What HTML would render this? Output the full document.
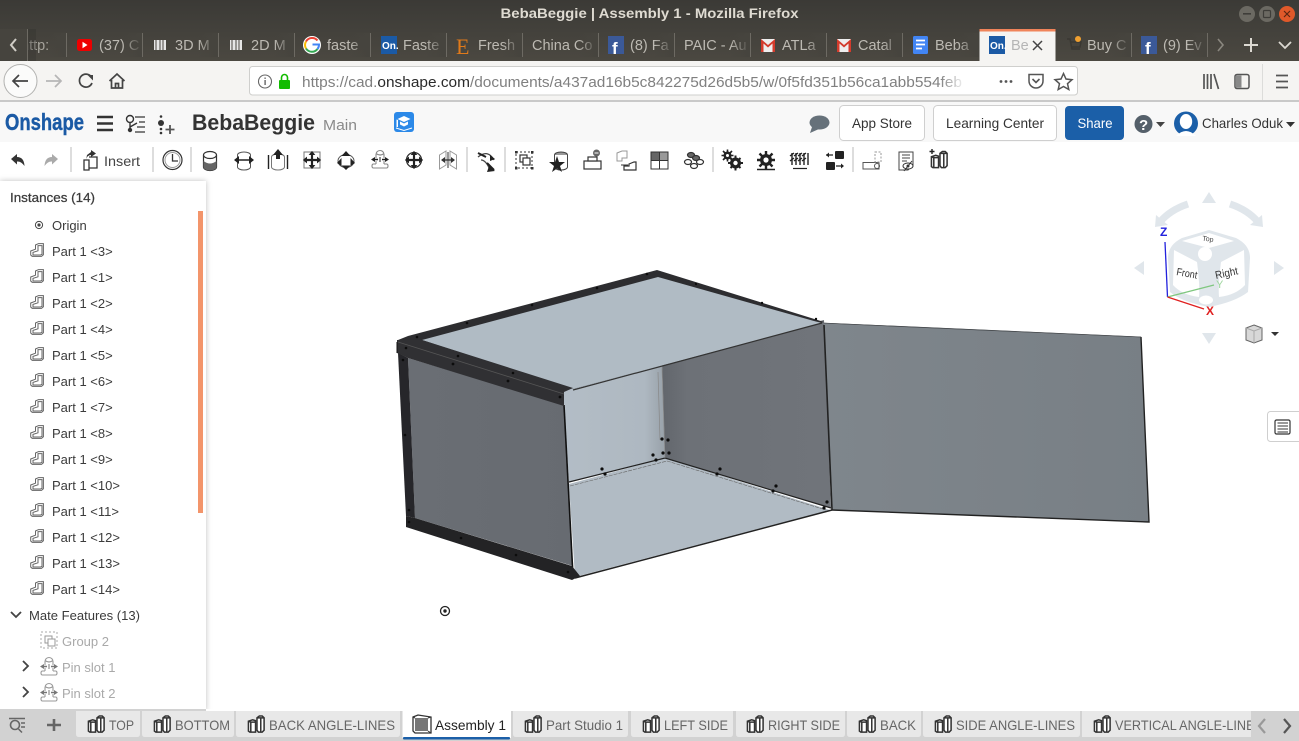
<!DOCTYPE html>
<html><head><meta charset="utf-8"><title>BebaBeggie | Assembly 1</title>
<style>
html,body{margin:0;padding:0;width:1299px;height:741px;overflow:hidden;background:#fff}
svg{display:block}
text{font-family:"Liberation Sans",sans-serif}
.tt{font-size:14.5px;fill:#bdbab3}
.tree{font-size:13px;fill:#3b3b3b}
.dim{font-size:13px;fill:#a9a9a9}
.tab{font-size:14px;fill:#666}
.sep{stroke:#6d6a63;stroke-width:1}
.bar{stroke:#ddd;stroke-width:2}
</style></head><body>
<svg width="1299" height="741" viewBox="0 0 1299 741" xmlns="http://www.w3.org/2000/svg">
<defs>
<linearGradient id="tb" x1="0" y1="0" x2="0" y2="1"><stop offset="0" stop-color="#3b3a36"/><stop offset="1" stop-color="#4b4841"/></linearGradient>
<linearGradient id="ff" x1="0" y1="0" x2="1" y2="0"><stop offset="0" stop-color="#46443e" stop-opacity="0"/><stop offset="1" stop-color="#46443e"/></linearGradient>
<linearGradient id="ffw" x1="0" y1="0" x2="1" y2="0"><stop offset="0" stop-color="#fff" stop-opacity="0"/><stop offset="1" stop-color="#fff"/></linearGradient>
<linearGradient id="door" x1="0" y1="0" x2="1" y2="0"><stop offset="0" stop-color="#7f868c"/><stop offset="1" stop-color="#787f85"/></linearGradient>
<linearGradient id="inr" x1="0" y1="0" x2="1" y2="0"><stop offset="0" stop-color="#62666c"/><stop offset=".15" stop-color="#6d7177"/><stop offset="1" stop-color="#70747a"/></linearGradient>
<linearGradient id="inl" x1="0" y1="0" x2="1" y2="0"><stop offset="0" stop-color="#b3bdc6"/><stop offset=".8" stop-color="#aeb8c1"/><stop offset="1" stop-color="#98a1a9"/></linearGradient>
<linearGradient id="lf" x1="0" y1="0" x2="1" y2="0"><stop offset="0" stop-color="#6a6e74"/><stop offset="1" stop-color="#676b71"/></linearGradient>
<symbol id="part" viewBox="0 0 14 14" overflow="visible"><path d="M.7 8 L5.5 6.2 V2 L8.5 .6 H13.4 V11.8 L11.5 13.4 H2.2 L.7 12 Z" fill="#fff" stroke="#666" stroke-width="1"/><path d="M3 9.4 L8 7.8 V2.6 H12 V11.4 L10.5 12 H3 Z" fill="#fff" stroke="#666" stroke-width="1"/></symbol>
<symbol id="tabi" viewBox="0 0 20 20" overflow="visible"><path d="M1.5 6.5 L6 5 L9 6 V18 H3 L1.5 17 Z M1.5 6.5 L4 7.5 V18 M4 7.5 H9" fill="#fff" stroke="#333" stroke-width="1.6"/><path d="M10.5 3 L13 1 H16 L18 3 V16 L16 18 H12 L10.5 16 Z M10.5 3 H14.5 V18 M14.5 3 L18 3" fill="#fff" stroke="#333" stroke-width="1.6"/></symbol>
<symbol id="pin" viewBox="0 0 18 19" overflow="visible"><g fill="none" stroke="#999" stroke-width="1.1"><path d="M5 8 V4.5 A4 4 0 0 1 13 4.5 V8 M5 3.5 Q9 6.5 13 3.5 M5 11 V14 M13 11 V14 M5 14 H2.5 Q1 14 1 16 Q1 18 2.5 18 H15.5 Q17 18 17 16 Q17 14 15.5 14 H13"/></g><path d="M0 9.5 L4 7 V8.8 H7 V10.2 H4 V12 Z M18 9.5 L14 7 V8.8 H11 V10.2 H14 V12 Z" fill="#777"/><path d="M9 7 V12" stroke="#777"/></symbol>
<symbol id="pind" viewBox="0 0 18 19" overflow="visible"><g fill="none" stroke="#888" stroke-width="1.1"><path d="M5 8 V4.5 A4 4 0 0 1 13 4.5 V8 M5 3.5 Q9 6.5 13 3.5 M5 11 V14 M13 11 V14 M5 14 H2.5 Q1 14 1 16 Q1 18 2.5 18 H15.5 Q17 18 17 16 Q17 14 15.5 14 H13"/></g><path d="M0 9.5 L4 7 V8.8 H7 V10.2 H4 V12 Z M18 9.5 L14 7 V8.8 H11 V10.2 H14 V12 Z" fill="#222"/><path d="M9 7 V12" stroke="#222"/></symbol>
<symbol id="arr" viewBox="0 0 24 24" overflow="visible"><path d="M12 1 L16 6 H13.3 V10.7 H18 V8 L23 12 L18 16 V13.3 H13.3 V18 H16 L12 23 L8 18 H10.7 V13.3 H6 V16 L1 12 L6 8 V10.7 H10.7 V6 H8 Z" fill="#222"/></symbol>
</defs>

<!-- Title bar + tab strip -->
<rect width="1299" height="61" fill="url(#tb)"/>
<text x="649.5" y="18" text-anchor="middle" font-size="14" font-weight="bold" fill="#dfdbd2" textLength="298" lengthAdjust="spacingAndGlyphs">BebaBeggie | Assembly 1 - Mozilla Firefox</text>
<circle cx="1247" cy="14" r="8" fill="#6b6962"/><rect x="1243" y="13" width="8" height="1.6" fill="#3e3d39"/>
<circle cx="1267" cy="14" r="8" fill="#6b6962"/><rect x="1263.5" y="10.5" width="7" height="7" rx="1" fill="none" stroke="#3e3d39" stroke-width="1.2"/>
<circle cx="1287" cy="14" r="8" fill="#e0592a"/><path d="M1284 11 L1290 17 M1290 11 L1284 17" stroke="#5c2612" stroke-width="1.2"/>

<!-- tab overflow left -->
<text x="21" y="50" class="tt" fill-opacity=".8">http:</text>
<rect x="0" y="29" width="27.5" height="32" fill="#46443e"/>
<path d="M16 39 L11 45 L16 51" fill="none" stroke="#d0cdc6" stroke-width="2"/>
<line x1="27.5" y1="29" x2="27.5" y2="61" stroke="#6d6a63"/>
<rect x="28" y="29" width="8" height="32" fill="#2f2d2a" opacity=".3"/>

<g transform="translate(0,-11)">
<g>
<line class="sep" x1="66.5" y1="44" x2="66.5" y2="68"/>
<line class="sep" x1="142.5" y1="44" x2="142.5" y2="68"/>
<line class="sep" x1="218.5" y1="44" x2="218.5" y2="68"/>
<line class="sep" x1="294.5" y1="44" x2="294.5" y2="68"/>
<line class="sep" x1="370.5" y1="44" x2="370.5" y2="68"/>
<line class="sep" x1="446.5" y1="44" x2="446.5" y2="68"/>
<line class="sep" x1="522.5" y1="44" x2="522.5" y2="68"/>
<line class="sep" x1="598.5" y1="44" x2="598.5" y2="68"/>
<line class="sep" x1="674.5" y1="44" x2="674.5" y2="68"/>
<line class="sep" x1="750.5" y1="44" x2="750.5" y2="68"/>
<line class="sep" x1="826.5" y1="44" x2="826.5" y2="68"/>
<line class="sep" x1="902.5" y1="44" x2="902.5" y2="68"/>
<line class="sep" x1="1131.5" y1="44" x2="1131.5" y2="68"/>
<line class="sep" x1="1207.5" y1="44" x2="1207.5" y2="68"/>
</g>
<!-- yt -->
<rect x="77" y="50" width="15" height="12" rx="2.5" fill="#e00"/><path d="M82.5 52.8 L87.5 56 L82.5 59.2 Z" fill="#fff"/>
<text x="99" y="61" class="tt">(37) C</text>
<!-- 3D -->
<rect x="154" y="51" width="5.5" height="10" fill="#e6e6e6"/><rect x="160.5" y="51" width="5.5" height="10" fill="#e6e6e6"/><path d="M156 51 V61 M163 51 V61" stroke="#4a4740"/>
<text x="175" y="61" class="tt">3D M</text>
<rect x="230" y="51" width="5.5" height="10" fill="#e6e6e6"/><rect x="236.5" y="51" width="5.5" height="10" fill="#e6e6e6"/><path d="M232 51 V61 M239 51 V61" stroke="#4a4740"/>
<text x="251" y="61" class="tt">2D M</text>
<!-- G -->
<circle cx="312" cy="56" r="9" fill="#fff"/>
<path d="M317.5 51.5 A7 7 0 0 0 306 52.5" fill="none" stroke="#ea4335" stroke-width="2"/><path d="M306 52.5 A7 7 0 0 0 306 59.5" fill="none" stroke="#fbbc05" stroke-width="2"/><path d="M306 59.5 A7 7 0 0 0 317.5 60" fill="none" stroke="#34a853" stroke-width="2"/><path d="M317.5 60 A7 7 0 0 0 319 55.5 H312.5" fill="none" stroke="#4285f4" stroke-width="2"/>
<text x="327" y="61" class="tt">faste</text>
<!-- On -->
<rect x="381" y="47" width="16" height="18" fill="#1b5aa5"/><text x="382" y="60" font-size="10" font-weight="bold" fill="#fff">On.</text>
<text x="403" y="61" class="tt">Faste</text>
<!-- E -->
<text x="456" y="65" font-size="22" fill="#e07a1a" style="font-family:'Liberation Serif',serif">E</text>
<text x="478" y="61" class="tt">Fresh</text>
<text x="532" y="61" class="tt">China Co</text>
<!-- f -->
<rect x="608" y="47" width="16" height="18" fill="#3b5998"/><text x="612" y="65" font-size="17" font-weight="bold" fill="#fff">f</text>
<text x="630" y="61" class="tt">(8) Fa</text>
<text x="684" y="61" class="tt">PAIC - Au</text>
<!-- gmail -->
<rect x="761" y="50" width="14" height="13" fill="#eee"/><path d="M761 50 L768 56 L775 50 V63 H772.5 V54.5 L768 58.5 L763.5 54.5 V63 H761 Z" fill="#d33b2c"/>
<text x="782" y="61" class="tt">ATLa</text>
<rect x="837" y="50" width="14" height="13" fill="#eee"/><path d="M837 50 L844 56 L851 50 V63 H848.5 V54.5 L844 58.5 L839.5 54.5 V63 H837 Z" fill="#d33b2c"/>
<text x="858" y="61" class="tt">Catal</text>
<!-- docs -->
<rect x="913" y="47" width="15" height="18" rx="1.5" fill="#4285f4"/><path d="M916 51.5 H925 M916 55.5 H925 M916 59.5 H922" stroke="#fff" stroke-width="1.8"/>
<text x="935" y="61" class="tt">Beba</text>
<!-- buy -->
<path d="M1067 50 H1070 L1072 60 H1080 M1071 53 H1081 L1080 58 H1072" fill="none" stroke="#3a3833" stroke-width="1.5"/><circle cx="1078" cy="50" r="3" fill="#f0a030"/>
<text x="1087" y="61" class="tt">Buy C</text>
<rect x="1141" y="47" width="16" height="18" fill="#3b5998"/><text x="1145" y="65" font-size="17" font-weight="bold" fill="#fff">f</text>
<text x="1163" y="61" class="tt">(9) Ev</text>
<!-- fade overlays -->
<rect x="48" y="44" width="18" height="24" fill="url(#ff)"/><rect x="122" y="44" width="20" height="24" fill="url(#ff)"/><rect x="198" y="44" width="20" height="24" fill="url(#ff)"/><rect x="274" y="44" width="20" height="24" fill="url(#ff)"/><rect x="350" y="44" width="20" height="24" fill="url(#ff)"/><rect x="426" y="44" width="20" height="24" fill="url(#ff)"/><rect x="502" y="44" width="20" height="24" fill="url(#ff)"/><rect x="578" y="44" width="20" height="24" fill="url(#ff)"/><rect x="654" y="44" width="20" height="24" fill="url(#ff)"/><rect x="730" y="44" width="20" height="24" fill="url(#ff)"/><rect x="806" y="44" width="20" height="24" fill="url(#ff)"/><rect x="882" y="44" width="20" height="24" fill="url(#ff)"/><rect x="958" y="44" width="21" height="24" fill="url(#ff)"/><rect x="1111" y="44" width="20" height="24" fill="url(#ff)"/><rect x="1187" y="44" width="20" height="24" fill="url(#ff)"/>
<!-- active tab -->
<rect x="979.5" y="40" width="76" height="32" fill="#f5f4f2"/><rect x="979.5" y="40" width="76" height="2.5" fill="#f0845a"/>
<rect x="989" y="47" width="16" height="18" fill="#1b5aa5"/><text x="990" y="60" font-size="10" font-weight="bold" fill="#fff">On.</text>
<text x="1011" y="61" font-size="14.5" fill="#b5b5b5">Be</text>
<path d="M1033 52 L1042 61 M1042 52 L1033 61" stroke="#444" stroke-width="1.5"/>
<path d="M1218 50 L1223 56 L1218 62" fill="none" stroke="#8a877f" stroke-width="1.6"/>
<path d="M1251 49 V63 M1244 56 H1258" stroke="#dcd9d2" stroke-width="2"/>
<path d="M1279 53 L1285 59 L1291 53" fill="none" stroke="#dcd9d2" stroke-width="1.8"/>
</g>

<!-- Nav toolbar -->
<rect y="61" width="1299" height="39" fill="#f5f4f2"/>
<rect x="979.5" y="59" width="76" height="3" fill="#f5f4f2"/>
<circle cx="20.5" cy="81" r="16.5" fill="#fbfbfa" stroke="#b2b2b0"/>
<path d="M28 81 H13 M19 75 L13 81 L19 87" fill="none" stroke="#444" stroke-width="1.7"/>
<path d="M61 81 H46 M55 75 L61 81 L55 87" fill="none" stroke="#b6b6b6" stroke-width="1.7"/>
<path d="M91 76.5 A6.5 6.5 0 1 0 92 83" fill="none" stroke="#444" stroke-width="1.7"/><path d="M87.5 75 L93 75 V80.5 Z" fill="#444"/>
<path d="M109.5 81 L117 74 L124.5 81 M111.5 80 V88 H122.5 V80 M115.5 88 V83.5 H118.5 V88" fill="none" stroke="#444" stroke-width="1.7"/>
<rect x="249.5" y="66.5" width="828" height="28.5" rx="3" fill="#fff" stroke="#cfcfcd"/>
<circle cx="265" cy="81.5" r="6.5" fill="none" stroke="#666" stroke-width="1.1"/><rect x="264.4" y="80" width="1.4" height="5" fill="#666"/><rect x="264.4" y="77.5" width="1.4" height="1.4" fill="#666"/>
<rect x="279" y="80" width="11" height="9" rx="1" fill="#12bc00"/><path d="M281.5 80 V77.5 A3 3 0 0 1 287.5 77.5 V80" fill="none" stroke="#12bc00" stroke-width="1.6"/>
<text x="302" y="87" font-size="15" fill="#808080" textLength="660" lengthAdjust="spacingAndGlyphs">https://cad.<tspan fill="#2b2b2b">onshape.com</tspan>/documents/a437ad16b5c842275d26d5b5/w/0f5fd351b56ca1abb554feb</text>
<rect x="940" y="68" width="26" height="26" fill="url(#ffw)"/>
<circle cx="1001" cy="81.5" r="1.4" fill="#555"/><circle cx="1006" cy="81.5" r="1.4" fill="#555"/><circle cx="1011" cy="81.5" r="1.4" fill="#555"/>
<path d="M1029 74.5 H1043 V81 A7 7 0 0 1 1029 81 Z" fill="none" stroke="#555" stroke-width="1.5"/><path d="M1032.5 79 L1036 82.5 L1039.5 79" fill="none" stroke="#555" stroke-width="1.6"/>
<path d="M1063.5 73.5 L1066 79 L1072 79.7 L1067.5 83.7 L1068.8 89.5 L1063.5 86.5 L1058.2 89.5 L1059.5 83.7 L1055 79.7 L1061 79 Z" fill="none" stroke="#555" stroke-width="1.5"/>
<path d="M1204 74 V89 M1207.5 74 V89 M1211 74 V89 M1214 74 L1218.5 89" fill="none" stroke="#555" stroke-width="1.7"/>
<rect x="1235" y="74.5" width="14" height="14" rx="2" fill="none" stroke="#555" stroke-width="1.5"/><rect x="1236" y="75.5" width="5.5" height="12" fill="#888"/>
<line x1="1262.5" y1="64" x2="1262.5" y2="100" stroke="#dcdcda"/>
<path d="M1276 75.5 H1288 M1276 81.5 H1288 M1276 87.5 H1288" stroke="#555" stroke-width="1.8"/>

<!-- page separator and Onshape header -->
<rect y="100" width="1299" height="2" fill="#c9c9c9"/>
<rect y="102" width="1299" height="40" fill="#f8f8f8"/>
<text x="5" y="130" font-size="23" font-weight="bold" fill="#1b5aa5" stroke="#1b5aa5" stroke-width=".4" textLength="79" lengthAdjust="spacingAndGlyphs">Onshape</text>
<path d="M97 117 H113 M97 123.5 H113 M97 130 H113" stroke="#333" stroke-width="2.6"/>
<circle cx="130" cy="119" r="3.5" fill="none" stroke="#333" stroke-width="1.4"/><circle cx="130" cy="130" r="2.2" fill="#333"/><path d="M130 122.5 V128 M130 127 L137 123" fill="none" stroke="#333" stroke-width="1.4"/>
<path d="M135 117 H145 M139 122 H145 M137 127 H145 M135 132 H145" stroke="#555" stroke-width="1.5"/>
<circle cx="161" cy="116.5" r="1.3" fill="#333"/><circle cx="161" cy="123" r="3" fill="#333"/><circle cx="161" cy="129" r="1.3" fill="#333"/><circle cx="161" cy="133" r="1.3" fill="#333"/>
<path d="M170 125 V134 M165.5 129.5 H174.5" stroke="#555" stroke-width="1.8"/>
<text x="192" y="130" font-size="22" font-weight="bold" fill="#333" textLength="123" lengthAdjust="spacingAndGlyphs">BebaBeggie</text>
<text x="323" y="130" font-size="15" fill="#8a8a8a" textLength="34" lengthAdjust="spacingAndGlyphs">Main</text>
<rect x="394" y="112" width="20" height="20" rx="3" fill="#2c89e8"/><path d="M397.5 119 L404 116 L410.5 119 L404 122 Z" fill="#fff"/><path d="M400 121.5 V124.5 L404 126.5 L408 124.5 V121.5 L404 123.5 Z M396.5 119.5 V127 H398 V120 Z" fill="#fff"/><path d="M396 128 L404 130.5 L412 128" fill="none" stroke="#fff" stroke-width="1"/>
<ellipse cx="819.5" cy="122.5" rx="10" ry="7" fill="#66717a"/><path d="M812 127 L810 133 L819 129 Z" fill="#66717a"/>
<rect x="839.5" y="105.5" width="85" height="35" rx="4" fill="#fff" stroke="#cfcfcf"/>
<text x="852" y="128" font-size="14" fill="#333" textLength="60" lengthAdjust="spacingAndGlyphs">App Store</text>
<rect x="933.5" y="105.5" width="123" height="35" rx="4" fill="#fff" stroke="#cfcfcf"/>
<text x="946" y="128" font-size="14" fill="#333" textLength="98" lengthAdjust="spacingAndGlyphs">Learning Center</text>
<rect x="1065" y="106" width="59" height="34" rx="4" fill="#1b5fa8"/>
<text x="1077.5" y="128" font-size="14" fill="#fff" textLength="35" lengthAdjust="spacingAndGlyphs">Share</text>
<circle cx="1143.5" cy="124" r="9" fill="#55606a"/>
<text x="1139" y="130" font-size="15" font-weight="bold" fill="#fff">?</text>
<path d="M1156 122 H1165 L1160.5 127 Z" fill="#444"/>
<circle cx="1186" cy="123.5" r="12" fill="#1b5fa8"/><ellipse cx="1186" cy="121.5" rx="6.2" ry="7.5" fill="#fff"/><path d="M1176 136 Q1186 126 1196 136 Z" fill="#fff"/>
<text x="1202" y="128" font-size="14" fill="#333" textLength="81" lengthAdjust="spacingAndGlyphs">Charles Oduk</text>
<path d="M1286 122 H1295 L1290.5 127 Z" fill="#333"/>

<!-- Toolbar -->
<rect y="142" width="1299" height="36" fill="#fff"/>
<g>
<line class="bar" x1="71" y1="147" x2="71" y2="172"/><line class="bar" x1="153" y1="147" x2="153" y2="172"/><line class="bar" x1="191" y1="147" x2="191" y2="172"/><line class="bar" x1="467" y1="147" x2="467" y2="172"/><line class="bar" x1="505" y1="147" x2="505" y2="172"/><line class="bar" x1="713" y1="147" x2="713" y2="172"/><line class="bar" x1="853" y1="147" x2="853" y2="172"/>
</g>
<path d="M11 159 L17 154 V157 Q24 157 24.5 166 Q21 161 17 161.5 V164.5 Z" fill="#333"/>
<path d="M58 159 L52 154 V157 Q45 157 44.5 166 Q48 161 52 161.5 V164.5 Z" fill="#aaa"/>
<path d="M87 155 L91 152 V150 L96 153.5 L91 157 V155 Q87 155 86 160 Z" fill="#333"/><path d="M84 160 H89 V170 H84 Z M89 157 H97 V168 H89" fill="#fff" stroke="#333" stroke-width="1.3"/>
<text x="104" y="166" font-size="13.5" fill="#444" textLength="36" lengthAdjust="spacingAndGlyphs">Insert</text>
<circle cx="172.5" cy="160" r="9.5" fill="none" stroke="#333" stroke-width="1.2"/><circle cx="172.5" cy="160" r="7.5" fill="none" stroke="#999" stroke-width="1"/><path d="M172.5 154 V161 H178" fill="none" stroke="#333" stroke-width="1.3"/>
<path d="M203.5 155 V167 A6.5 3.5 0 0 0 216.5 167 V155" fill="#fff" stroke="#333" stroke-width="1.2"/><ellipse cx="210" cy="155" rx="6.5" ry="3.5" fill="#fff" stroke="#333" stroke-width="1.2"/><path d="M203.5 161 Q210 166 216.5 161 V167 A6.5 3.5 0 0 1 203.5 167 Z" fill="#666"/>
<g><ellipse cx="244" cy="155" rx="6.5" ry="3" fill="#fff" stroke="#555"/><path d="M237.5 155 V167 A6.5 3 0 0 0 250.5 167 V155" fill="#fff" stroke="#555"/><path d="M235 160 H253" stroke="#222" stroke-width="1.6"/><path d="M234 160 L239 156 V164 Z M254 160 L249 156 V164 Z" fill="#222"/></g>
<g><ellipse cx="278" cy="157" rx="6.5" ry="3" fill="#fff" stroke="#777"/><path d="M271.5 157 V167 A6.5 3 0 0 0 284.5 167 V157" fill="#fff" stroke="#777"/><path d="M268.5 155 V169 M287.5 155 V169" stroke="#222" stroke-width="1.4"/><path d="M278 149 L283 155 H280 V159 H276 V155 H273 Z" fill="#222"/></g>
<g><rect x="304" y="152" width="16" height="16" fill="none" stroke="#777"/><use href="#arr" x="302" y="150" width="20" height="20"/></g>
<g><ellipse cx="346" cy="161" rx="8" ry="6.5" fill="none" stroke="#555"/><path d="M337 163 L341.5 158 V166 Z M355 163 L350.5 158 V166 Z M346 151 L350.5 156 H341.5 Z M346 170 L341.5 165.5 H350.5 Z" fill="#222"/></g>
<use href="#pind" x="371" y="150" width="18" height="19"/>
<g><circle cx="414" cy="160" r="7.5" fill="none" stroke="#333" stroke-width="1.3"/><use href="#arr" x="404" y="150" width="20" height="20"/></g>
<g><path d="M439.5 155 L446 151 V165 L439.5 169 Z M450 151 L456.5 155 V169 L450 165 Z" fill="none" stroke="#999"/><path d="M442 160 H454" stroke="#333" stroke-width="1.3"/><path d="M441 160 L445 157 V163 Z M455 160 L451 157 V163 Z" fill="#333"/><path d="M448 152 V168" stroke="#333"/></g>
<g fill="none" stroke="#444" stroke-width="1.3"><path d="M478 157 Q488 149 494 160 M481 160 Q486 160 490 170"/><path d="M478 153 L486 157" stroke-width="2" stroke="#222"/><path d="M487 163 L494 170" stroke-width="2" stroke="#222"/></g><path d="M490 155 L495 159 L490 161 Z M489 166 L495 171 L487 172 Z" fill="#222"/>
<g><rect x="516" y="152" width="16" height="16" fill="none" stroke="#333" stroke-dasharray="2 2"/><rect x="520" y="155" width="7" height="7" fill="#fff" stroke="#333" stroke-width="1.2"/><rect x="523" y="158" width="7" height="7" fill="#fff" stroke="#333" stroke-width="1.2"/><rect x="515" y="151" width="2.5" height="2.5" fill="#333"/><rect x="531" y="151" width="2.5" height="2.5" fill="#333"/><rect x="515" y="167" width="2.5" height="2.5" fill="#333"/><rect x="531" y="167" width="2.5" height="2.5" fill="#333"/></g>
<g><ellipse cx="561" cy="155" rx="6.5" ry="3" fill="#999" stroke="#444"/><path d="M554.5 155 V167 A6.5 3 0 0 0 567.5 167 V155" fill="#fff" stroke="#444"/><path d="M557 156 L559 162 H565 L560 166 L562 172 L557 168.5 L552 172 L554 166 L549 162 H555 Z" fill="#222"/></g>
<g><rect x="584" y="161" width="17" height="8" fill="#fff" stroke="#333" stroke-width="1.2"/><rect x="588" y="157" width="9" height="4" fill="#fff" stroke="#333" stroke-width="1.2"/><circle cx="596.5" cy="153" r="3.5" fill="#666"/><path d="M594.5 153 H598.5" stroke="#fff"/></g>
<g fill="#fff"><path d="M617 153 L622 151 H627 V158 H622 V161 H617 Z" stroke="#999"/><path d="M629 164 L634 162 H636 V170 H624 V166 H629 Z" stroke="#333" stroke-width="1.2"/></g><path d="M621 165 H628" stroke="#333"/>
<g><rect x="651" y="152" width="8.5" height="8.5" fill="#666" stroke="#333"/><rect x="659.5" y="152" width="8.5" height="8.5" fill="#999" stroke="#333"/><rect x="651" y="160.5" width="8.5" height="8.5" fill="#fff" stroke="#333"/><rect x="659.5" y="160.5" width="8.5" height="8.5" fill="#fff" stroke="#333"/></g>
<g fill="none" stroke="#333" stroke-width="1.2"><ellipse cx="691" cy="155" rx="3.5" ry="2.5" fill="#666"/><ellipse cx="696" cy="158" rx="3.5" ry="2.5" fill="#666"/><ellipse cx="688" cy="162" rx="3.5" ry="2.5"/><ellipse cx="700" cy="162" rx="3.5" ry="2.5"/><ellipse cx="694" cy="166" rx="3.5" ry="2.5"/></g>
<g fill="#222"><circle cx="727.5" cy="155.5" r="4"/><circle cx="735.5" cy="163" r="5.5"/><path d="M727.5 149.5 V161.5 M721.5 155.5 H733.5 M723 151 L732 160 M732 151 L723 160" stroke="#222" stroke-width="1.6"/><path d="M735.5 155.5 V170.5 M728 163 H743 M730.5 158 L740.5 168 M740.5 158 L730.5 168" stroke="#222" stroke-width="2"/></g><circle cx="727.5" cy="155.5" r="1.5" fill="#fff"/><circle cx="735.5" cy="163" r="2.2" fill="#fff"/>
<g><circle cx="766" cy="160" r="6" fill="#222"/><path d="M766 151 V169 M757 160 H775 M759.5 153.5 L772.5 166.5 M772.5 153.5 L759.5 166.5" stroke="#222" stroke-width="2.4"/><circle cx="766" cy="160" r="2.6" fill="#fff"/><path d="M757 169.5 H775" stroke="#222" stroke-width="1.6"/></g>
<g fill="none" stroke="#222" stroke-width="1.4"><path d="M792 153 V165 M796 153 V165 M800 153 V165 M804 153 V165 M808 153 V165"/><path d="M790 156 L794 153 M794 156 L798 153 M798 156 L802 153 M802 156 L806 153 M790 161 L794 158 M794 161 L798 158 M798 161 L802 158 M802 161 L806 158"/><path d="M793 168.5 H807" stroke-width="1.2"/></g>
<g fill="#222"><rect x="835" y="151" width="9" height="8" rx="1"/><rect x="826" y="162" width="9" height="8" rx="1"/><path d="M826 155 H833 M836 166 H843" stroke="#222" stroke-width="1.2"/><path d="M826 155 L829 152.5 V157.5 Z M844 166 L841 163.5 V168.5 Z"/></g>
<g><rect x="863" y="162.5" width="16" height="6.5" fill="#fff" stroke="#555"/><rect x="875" y="152" width="6" height="10" fill="none" stroke="#999" stroke-dasharray="2 1.5"/><circle cx="877" cy="166" r="2.5" fill="none" stroke="#555"/></g>
<g><path d="M899 152 H913 V165 L908 170 H899 Z" fill="#fff" stroke="#444"/><path d="M902 155 H910 M902 158 H910 M902 161 H907" stroke="#444"/><ellipse cx="908" cy="166" rx="5" ry="3" fill="#fff" stroke="#333"/><circle cx="908" cy="166" r="1.5" fill="#333"/><path d="M904 171 L912 161" stroke="#333"/></g>
<use href="#tabi" x="930" y="150" width="19" height="20"/>
<path d="M932 154 V149 M929.5 151.5 H934.5" stroke="#222" stroke-width="1.4"/>

<!-- Viewport content: model -->
<path d="M822 323 L1141 337 L1149 522 L832 510 Z" fill="url(#door)" stroke="#555" stroke-width=".6"/>
<path d="M1141 337 L1149 522 L832 510" fill="none" stroke="#222" stroke-width="1.4"/>
<path d="M1141 337 L822 323" fill="none" stroke="#4a4e52" stroke-width=".8"/>
<path d="M563 388 L662 361 L665 458 L569 482 Z" fill="url(#inl)"/>
<path d="M662 361 L824 320 L831 508 L665 458 Z" fill="url(#inr)"/>
<path d="M569 484 L665 458 L830 510 L575 577 Z" fill="#b1bbc4"/>
<path d="M569 482 L665 458 L831 508" fill="none" stroke="#222" stroke-width="1.2"/>
<path d="M570 486 L667 461 L826 510" fill="none" stroke="#666" stroke-width=".6" stroke-dasharray="4 1"/>
<path d="M662 367 L665 458 M658 372 L660 440" fill="none" stroke="#888" stroke-width=".7"/>
<path d="M824 325 L832 510" fill="none" stroke="#222" stroke-width="1.6"/>
<path d="M575 578 L832 510" fill="none" stroke="#222" stroke-width="1.5"/>
<path d="M408 358 L564 405 L573 566 L415 518 Z" fill="url(#lf)"/>
<path d="M564 405 L573 576" fill="none" stroke="#111" stroke-width="1.6"/>
<path d="M398 353 L408 358 L415 518 L406 516 Z" fill="#26262a"/>
<path d="M406 516 L415 518 L572 566 L580 576 L572 580 L406 527 Z" fill="#232325"/>
<path d="M398 340 L408 336 L657 270 L824 322 L573 389 Z" fill="#2d2d30"/>
<path d="M422 340 L658 277 L814 321 L822 323 L573 389 Z" fill="#b0bbc4"/>
<path d="M573 390 L822 323" stroke="#333" stroke-width="1.2"/>
<path d="M397 340 L422 340 L573 388 L564 392 L564 406 L408 358 L397 353 Z" fill="#303033"/>
<path d="M398 342 L564 394" stroke="#555" stroke-width=".8"/>
<path d="M397 342 V353" stroke="#111"/>
<g fill="#0c0c0c">
<circle cx="467" cy="323" r="1.3"/><circle cx="532" cy="305" r="1.3"/><circle cx="597" cy="288" r="1.3"/><circle cx="647" cy="274" r="1.3"/><circle cx="417" cy="337" r="1.3"/>
<circle cx="406" cy="348" r="1.3"/><circle cx="403" cy="360" r="1.3"/><circle cx="453" cy="364" r="1.4"/><circle cx="508" cy="381" r="1.4"/><circle cx="560" cy="397" r="1.4"/><circle cx="458" cy="356" r="1.3"/><circle cx="513" cy="373" r="1.3"/>
<circle cx="405" cy="435" r="1.3"/><circle cx="409" cy="510" r="1.3"/><circle cx="409" cy="522" r="1.3"/><circle cx="461" cy="538" r="1.3"/><circle cx="516" cy="555" r="1.3"/><circle cx="568" cy="572" r="1.3"/>
<circle cx="602" cy="469" r="1.6"/><circle cx="605" cy="474" r="1.6"/><circle cx="653" cy="455" r="1.6"/><circle cx="656" cy="460" r="1.6"/><circle cx="662" cy="439" r="1.6"/><circle cx="668" cy="440" r="1.6"/><circle cx="663" cy="453" r="1.6"/><circle cx="669" cy="453" r="1.6"/><circle cx="720" cy="469" r="1.6"/><circle cx="717" cy="474" r="1.6"/><circle cx="776" cy="486" r="1.6"/><circle cx="773" cy="491" r="1.6"/><circle cx="827" cy="502" r="1.6"/><circle cx="824" cy="508" r="1.6"/><circle cx="696" cy="284" r="1.2"/><circle cx="762" cy="303" r="1.2"/><circle cx="816" cy="319" r="1.2"/>
</g>
<circle cx="445" cy="611" r="4.5" fill="#fff" stroke="#222" stroke-width="1.3"/><circle cx="445" cy="611" r="1.7" fill="#222"/>

<!-- Nav cube -->
<g fill="#e0e6eb">
<path d="M1209 192 L1216 203 H1202 Z"/><path d="M1134 268 L1144 261 V275 Z"/><path d="M1284 268 L1274 261 V275 Z"/><path d="M1209 344 L1202 333 H1216 Z"/>
</g>
<g fill="none" stroke="#e0e6eb" stroke-width="7"><path d="M1188 204 Q1170 210 1160 222"/><path d="M1230 204 Q1248 210 1258 222"/></g>
<path d="M1155 227 L1156 215 L1168 225 Z M1263 227 L1262 215 L1250 225 Z" fill="#e0e6eb"/>
<path d="M1182 238 L1209 230 L1236 238 Q1250 245 1250 258 L1248 292 Q1235 302 1209 307 Q1182 302 1170 292 L1168 258 Q1168 245 1182 238 Z" fill="#e0e6eb"/>
<path d="M1182 241 L1209 233 L1234 241 L1209 248 Z" fill="#fff"/>
<path d="M1174 250 L1197 262 Q1200 285 1199 297 Q1182 295 1173 285 Z" fill="#fff"/>
<path d="M1244 250 L1221 262 Q1218 285 1219 297 Q1236 295 1245 285 Z" fill="#fff"/>
<ellipse cx="1205" cy="254" rx="7" ry="7" fill="#fff"/><ellipse cx="1206" cy="300" rx="7" ry="4.5" fill="#fff"/>
<text x="1202" y="241" font-size="7" fill="#444" transform="rotate(8 1206 241)">Top</text>
<text x="1176" y="275" font-size="10.5" fill="#333" transform="rotate(10 1176 275)" textLength="21" lengthAdjust="spacingAndGlyphs">Front</text>
<text x="1216" y="279" font-size="11" fill="#333" transform="rotate(-12 1216 279)" textLength="23" lengthAdjust="spacingAndGlyphs">Right</text>
<path d="M1167.5 297 L1165 242" stroke="#2222dd" stroke-width="1.3"/><path d="M1167.5 297 L1214 285" stroke="#7fc77f" stroke-width="1.2"/><path d="M1167.5 297 L1204 309" stroke="#e02020" stroke-width="1.3"/>
<text x="1160" y="236" font-size="12" font-weight="bold" fill="#2222dd">Z</text>
<text x="1216" y="288" font-size="11" fill="#9fd69f">Y</text>
<text x="1206" y="315" font-size="12" font-weight="bold" fill="#e02020">X</text>
<path d="M1254 325 L1262 328 V340 L1254 343 L1246 340 V328 Z" fill="#d8d8d8" stroke="#666"/><path d="M1246 328 L1254 331 L1262 328 M1254 331 V343" fill="none" stroke="#aaa"/>
<path d="M1271 332 H1279 L1275 336 Z" fill="#333"/>
<rect x="1267.5" y="411.5" width="40" height="30" rx="3" fill="#fff" stroke="#cfcfcf"/>
<rect x="1275" y="420" width="15" height="14" rx="1.5" fill="none" stroke="#333" stroke-width="1.2"/><path d="M1277.5 423 H1288 M1277.5 426 H1288 M1277.5 429 H1288 M1277.5 432 H1288" stroke="#333"/>

<!-- Instances panel -->
<rect x="0" y="181" width="206" height="530" fill="#fff" style="filter:drop-shadow(0 0 3px rgba(0,0,0,.25))"/>
<text x="10" y="202" font-size="13" fill="#3b3b3b" textLength="85" lengthAdjust="spacingAndGlyphs" stroke="#3b3b3b" stroke-width=".25">Instances (14)</text>
<rect x="198" y="211" width="5" height="302" fill="#f3956b"/>
<circle cx="39" cy="225" r="3.6" fill="none" stroke="#444"/><circle cx="39" cy="225" r="1.6" fill="#444"/>
<text x="52" y="230" class="tree">Origin</text>
<use href="#part" x="30" y="243" width="14" height="14"/><text x="52" y="256" class="tree">Part 1 &lt;3&gt;</text>
<use href="#part" x="30" y="269" width="14" height="14"/><text x="52" y="282" class="tree">Part 1 &lt;1&gt;</text>
<use href="#part" x="30" y="295" width="14" height="14"/><text x="52" y="308" class="tree">Part 1 &lt;2&gt;</text>
<use href="#part" x="30" y="321" width="14" height="14"/><text x="52" y="334" class="tree">Part 1 &lt;4&gt;</text>
<use href="#part" x="30" y="347" width="14" height="14"/><text x="52" y="360" class="tree">Part 1 &lt;5&gt;</text>
<use href="#part" x="30" y="373" width="14" height="14"/><text x="52" y="386" class="tree">Part 1 &lt;6&gt;</text>
<use href="#part" x="30" y="399" width="14" height="14"/><text x="52" y="412" class="tree">Part 1 &lt;7&gt;</text>
<use href="#part" x="30" y="425" width="14" height="14"/><text x="52" y="438" class="tree">Part 1 &lt;8&gt;</text>
<use href="#part" x="30" y="451" width="14" height="14"/><text x="52" y="464" class="tree">Part 1 &lt;9&gt;</text>
<use href="#part" x="30" y="477" width="14" height="14"/><text x="52" y="490" class="tree">Part 1 &lt;10&gt;</text>
<use href="#part" x="30" y="503" width="14" height="14"/><text x="52" y="516" class="tree">Part 1 &lt;11&gt;</text>
<use href="#part" x="30" y="529" width="14" height="14"/><text x="52" y="542" class="tree">Part 1 &lt;12&gt;</text>
<use href="#part" x="30" y="555" width="14" height="14"/><text x="52" y="568" class="tree">Part 1 &lt;13&gt;</text>
<use href="#part" x="30" y="581" width="14" height="14"/><text x="52" y="594" class="tree">Part 1 &lt;14&gt;</text>
<path d="M11 612 L16 617 L21 612" fill="none" stroke="#444" stroke-width="1.8"/>
<text x="29" y="620" class="tree" textLength="111" lengthAdjust="spacingAndGlyphs">Mate Features (13)</text>
<g><rect x="41" y="632" width="16" height="16" fill="none" stroke="#aaa" stroke-dasharray="2 2"/><rect x="45" y="636" width="7" height="7" fill="#fff" stroke="#999"/><rect x="48" y="639" width="7" height="7" fill="#fff" stroke="#999"/></g>
<text x="62" y="646" class="dim">Group 2</text>
<path d="M23 661 L28 666 L23 671" fill="none" stroke="#444" stroke-width="1.8"/>
<use href="#pin" x="40" y="657" width="18" height="19"/><text x="62" y="672" class="dim">Pin slot 1</text>
<path d="M23 687 L28 692 L23 697" fill="none" stroke="#444" stroke-width="1.8"/>
<use href="#pin" x="40" y="683" width="18" height="19"/><text x="62" y="698" class="dim">Pin slot 2</text>

<!-- Bottom tab bar -->
<rect y="709" width="1299" height="32" fill="#d2d2d2"/>
<rect y="709" x="206" width="1093" height="2" fill="#fff"/>
<circle cx="15" cy="725" r="4.5" fill="none" stroke="#666" stroke-width="1.6"/><path d="M9 718.5 H25 M21 723 H25 M21 727 H25 M18.5 729 L22 732.5" stroke="#666" stroke-width="1.5"/>
<path d="M54 719 V731 M47 725 H61" stroke="#666" stroke-width="2.6"/>
<g fill="#e8e8e8">
<path d="M76 711 H140 V734 Q140 737 137 737 H79 Q76 737 76 734 Z"/>
<path d="M142 711 H234 V734 Q234 737 231 737 H145 Q142 737 142 734 Z"/>
<path d="M236 711 H400 V734 Q400 737 397 737 H239 Q236 737 236 734 Z"/>
<path d="M513 711 H628 V734 Q628 737 625 737 H516 Q513 737 513 734 Z"/>
<path d="M631 711 H733 V734 Q733 737 730 737 H634 Q631 737 631 734 Z"/>
<path d="M736 711 H845 V734 Q845 737 842 737 H739 Q736 737 736 734 Z"/>
<path d="M847 711 H921 V734 Q921 737 918 737 H850 Q847 737 847 734 Z"/>
<path d="M923 711 H1080 V734 Q1080 737 1077 737 H926 Q923 737 923 734 Z"/>
</g>
<rect x="402.5" y="711" width="108.5" height="27" fill="#fff"/><rect x="403" y="737" width="107" height="2.5" rx="1" fill="#1b5fa8"/>
<use href="#tabi" x="87" y="715" width="19" height="19"/><text x="109" y="730" class="tab" textLength="25" lengthAdjust="spacingAndGlyphs">TOP</text>
<use href="#tabi" x="153" y="715" width="19" height="19"/><text x="175" y="730" class="tab" textLength="55" lengthAdjust="spacingAndGlyphs">BOTTOM</text>
<use href="#tabi" x="247" y="715" width="19" height="19"/><text x="269" y="730" class="tab" textLength="126" lengthAdjust="spacingAndGlyphs">BACK ANGLE-LINES</text>
<g><path d="M413 717 L418 715 L431 717 V733 H415 L413 731 Z" fill="#fff" stroke="#333" stroke-width="1.3"/><path d="M415 718 H428 V731 H415 Z" fill="#777"/><path d="M415 718 L413 717 M428 718 L431 717 M428 731 L431 733" stroke="#333"/></g>
<text x="435" y="730" font-size="14" fill="#222" textLength="71" lengthAdjust="spacingAndGlyphs">Assembly 1</text>
<use href="#tabi" x="524" y="715" width="19" height="19"/><text x="546" y="730" class="tab" textLength="77" lengthAdjust="spacingAndGlyphs">Part Studio 1</text>
<use href="#tabi" x="642" y="715" width="19" height="19"/><text x="664" y="730" class="tab" textLength="64" lengthAdjust="spacingAndGlyphs">LEFT SIDE</text>
<use href="#tabi" x="746" y="715" width="19" height="19"/><text x="768" y="730" class="tab" textLength="72" lengthAdjust="spacingAndGlyphs">RIGHT SIDE</text>
<use href="#tabi" x="858" y="715" width="19" height="19"/><text x="880" y="730" class="tab" textLength="36" lengthAdjust="spacingAndGlyphs">BACK</text>
<use href="#tabi" x="934" y="715" width="19" height="19"/><text x="956" y="730" class="tab" textLength="119" lengthAdjust="spacingAndGlyphs">SIDE ANGLE-LINES</text>
<path d="M1082 711 H1255 V737 H1082 Z" fill="#e8e8e8"/>
<use href="#tabi" x="1093" y="715" width="19" height="19"/><text x="1115" y="730" class="tab" textLength="148" lengthAdjust="spacingAndGlyphs">VERTICAL ANGLE-LINES</text>
<rect x="1251" y="711" width="48" height="30" fill="#d2d2d2"/>
<path d="M1265 719 L1259 726 L1265 733" fill="none" stroke="#999" stroke-width="2.2"/>
<path d="M1284 719 L1290 726 L1284 733" fill="none" stroke="#555" stroke-width="2.2"/>
</svg>
</body></html>
